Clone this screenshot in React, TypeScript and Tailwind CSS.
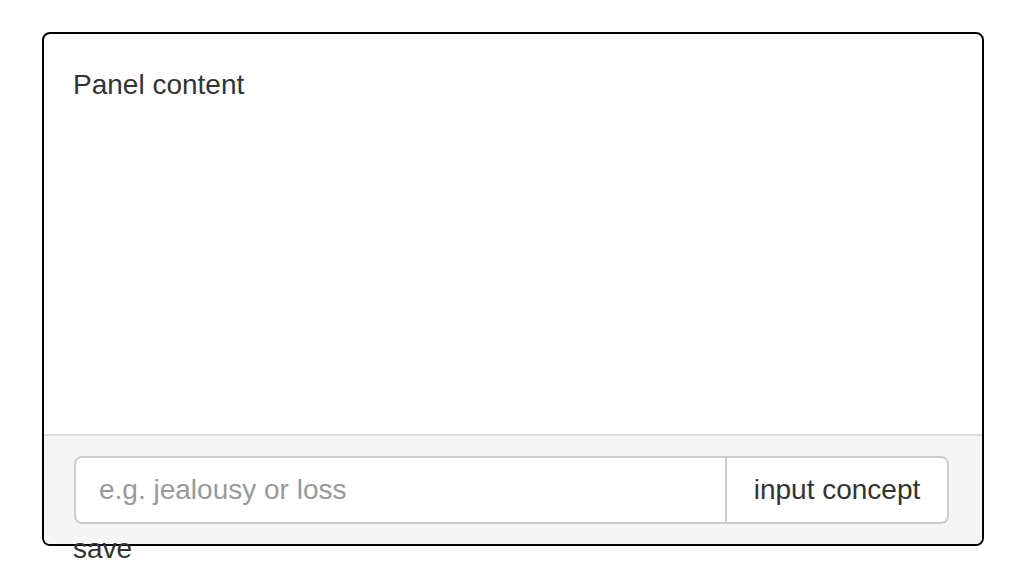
import React from "react";

export default function App() {
  return (
    <div className="w-[1022px] h-[582px] bg-white text-[#333] text-[28px] leading-[40px] overflow-hidden" style={{ fontFamily: '"Liberation Sans", Arial, sans-serif' }}>
      <div className="pt-[32px] pl-[42px] w-[984px]">
        <div className="border-2 border-black rounded-[8px] bg-white h-[514px] flex flex-col overflow-hidden">
          <div className="h-[400px] pt-[31px] pl-[29px] pr-[30px]">Panel content</div>
          <div className="border-t-2 border-[#ddd] bg-[#f5f5f5] pl-[30px] pr-[33px] py-[20px] flex-1">
            <div className="flex h-[68px]">
              <input
                className="flex-1 min-w-0 h-[68px] border-2 border-[#ccc] rounded-l-[8px] bg-white px-[23px] text-[28px] text-[#555] placeholder:text-[#999] outline-none"
                placeholder="e.g. jealousy or loss"
                style={{ fontFamily: '"Liberation Sans", Arial, sans-serif' }}
              />
              <div className="w-[222px] h-[68px] border-2 border-l-0 border-[#ccc] rounded-r-[8px] bg-white flex items-center justify-center">input concept</div>
            </div>
          </div>
        </div>
      </div>
      <div className="pl-[73px] mt-[-17px]">save</div>
    </div>
  );
}
